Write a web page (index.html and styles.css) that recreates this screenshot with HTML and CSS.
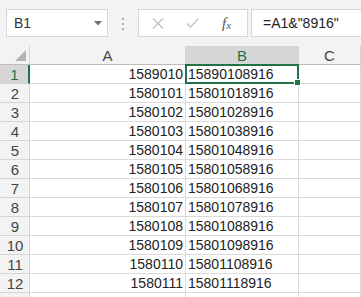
FILE: index.html
```html
<!doctype html>
<html lang="en">
 <head>
  <meta charset="utf-8">
  <title>Book1 - Sheet1</title>
  <link rel="stylesheet" href="styles.css">
 </head>
 <body>
  <div class="formula-bar">
   <div class="name-box">
    <span>B1</span>
    <svg class="name-arrow" width="8" height="5" viewBox="0 0 8 5"><path d="M0 0h8L4 4.5z" fill="#6f6f6f"/></svg>
   </div>
   <div class="grip"><i></i><i></i><i></i></div>
   <div class="func-box">
    <svg class="ico-cancel" width="12" height="11" viewBox="0 0 12 11"><path d="M1 0.5l10 10M11 0.5l-10 10" stroke="#c4c4c4" stroke-width="1.4" fill="none"/></svg>
    <svg class="ico-enter" width="13" height="10" viewBox="0 0 13 10"><path d="M1 5.5l3.5 3.5L12 1" stroke="#c4c4c4" stroke-width="1.4" fill="none"/></svg>
    <span class="ico-fx">f<sub>x</sub></span>
   </div>
   <div class="formula-input">=A1&amp;"8916"</div>
  </div>

  <div class="sheet">
   <div class="hd corner"><span class="corner-tri"></span></div>
   <div class="hd col">A</div>
   <div class="hd col active">B</div>
   <div class="hd col">C</div>

   <div class="hd row active">1</div>
   <div class="cell num">1589010</div>
   <div class="cell sel">15890108916<span class="sel-box"><span class="fill-handle"></span></span></div>
   <div class="cell"></div>

   <div class="hd row">2</div><div class="cell num">1580101</div><div class="cell">15801018916</div><div class="cell"></div>
   <div class="hd row">3</div><div class="cell num">1580102</div><div class="cell">15801028916</div><div class="cell"></div>
   <div class="hd row">4</div><div class="cell num">1580103</div><div class="cell">15801038916</div><div class="cell"></div>
   <div class="hd row">5</div><div class="cell num">1580104</div><div class="cell">15801048916</div><div class="cell"></div>
   <div class="hd row">6</div><div class="cell num">1580105</div><div class="cell">15801058916</div><div class="cell"></div>
   <div class="hd row">7</div><div class="cell num">1580106</div><div class="cell">15801068916</div><div class="cell"></div>
   <div class="hd row">8</div><div class="cell num">1580107</div><div class="cell">15801078916</div><div class="cell"></div>
   <div class="hd row">9</div><div class="cell num">1580108</div><div class="cell">15801088916</div><div class="cell"></div>
   <div class="hd row">10</div><div class="cell num">1580109</div><div class="cell">15801098916</div><div class="cell"></div>
   <div class="hd row">11</div><div class="cell num">1580110</div><div class="cell">15801108916</div><div class="cell"></div>
   <div class="hd row">12</div><div class="cell num">1580111</div><div class="cell">15801118916</div><div class="cell"></div>
   <div class="hd row"></div><div class="cell"></div><div class="cell"></div><div class="cell"></div>
  </div>
 </body>
</html>
```

FILE: styles.css
```css
body {
	margin: 0;
	padding: 0;
	width: 361px;
	height: 297px;
	overflow: hidden;
	background: #ffffff;
	font-family: "Liberation Sans", Arial, sans-serif;
	color: #222;
	box-shadow: inset 1px 0 0 #217346;
}

/* formula bar */
.formula-bar {
	display: flex;
	align-items: flex-start;
	height: 46px;
	box-sizing: border-box;
	padding: 9px 0 0 6px;
	background: #f3f3f3;
}

.name-box {
	display: flex;
	align-items: center;
	justify-content: space-between;
	width: 102px;
	height: 28px;
	box-sizing: border-box;
	padding: 0 5px 0 7px;
	background: #fff;
	border: 1px solid #d6d6d6;
	font-size: 14px;
	color: #333;
}

.name-arrow {
	margin-top: 1px;
}

.grip {
	display: flex;
	flex-direction: column;
	align-items: center;
	gap: 3px;
	width: 30px;
	padding-top: 9px;
}

.grip i {
	display: block;
	width: 2px;
	height: 2px;
	background: #a8a8a8;
}

.func-box {
	display: flex;
	align-items: center;
	width: 110px;
	height: 28px;
	box-sizing: border-box;
	background: #fff;
	border: 1px solid #d6d6d6;
	margin-right: 3px;
}

.ico-cancel {
	margin-left: 13px;
}

.ico-enter {
	margin-left: 22px;
}

.ico-fx {
	margin-left: 23px;
	font-family: "Liberation Serif", "Times New Roman", serif;
	font-style: italic;
	font-size: 15px;
	color: #555;
	line-height: 1;
}

.ico-fx sub {
	font-size: 11px;
	vertical-align: -1px;
}

.formula-input {
	flex: 1;
	height: 28px;
	box-sizing: border-box;
	padding: 0 0 0 11px;
	background: #fff;
	border: 1px solid #d6d6d6;
	border-right: 0;
	font-size: 14px;
	line-height: 26px;
	color: #222;
}

/* sheet grid */
.sheet {
	display: grid;
	grid-template-columns: 30px 156px 113px 62px;
	grid-auto-rows: 19px;
}

.hd {
	box-sizing: border-box;
	background: #f3f3f3;
	border-right: 1px solid #d4d4d4;
	border-bottom: 1px solid #d4d4d4;
	color: #444;
	font-size: 15px;
	display: flex;
	align-items: flex-end;
	justify-content: center;
	line-height: 17px;
}

.hd.corner {
	position: relative;
	border-bottom-color: #bdbdbd;
}

.corner-tri {
	position: absolute;
	right: 3px;
	bottom: 3px;
	width: 0;
	height: 0;
	border-left: 11px solid transparent;
	border-bottom: 11px solid #b5b5b5;
}

.hd.col {
	border-bottom-color: #bdbdbd;
}

.hd.row {
	font-size: 15px;
	padding-left: 1px;
}

.hd.active {
	background: #d6d6d6;
	color: #217346;
}

.hd.row.active {
	border-right: 2px solid #217346;
}

.hd.col.active {
	border-bottom: 1px solid #217346;
}

.cell {
	box-sizing: border-box;
	border-right: 1px solid #dadada;
	border-bottom: 1px solid #dadada;
	font-size: 14px;
	line-height: 17px;
	padding: 0 2px;
	white-space: nowrap;
	display: flex;
	align-items: flex-end;
}

.cell.num {
	justify-content: flex-end;
}

.cell.sel {
	position: relative;
}

.sel-box {
	position: absolute;
	top: -1px;
	left: -1px;
	right: -1px;
	bottom: -1px;
	border: 2px solid #217346;
}

.fill-handle {
	position: absolute;
	right: -4px;
	bottom: -4px;
	width: 5px;
	height: 5px;
	background: #217346;
	border: 1px solid #fff;
}
```
